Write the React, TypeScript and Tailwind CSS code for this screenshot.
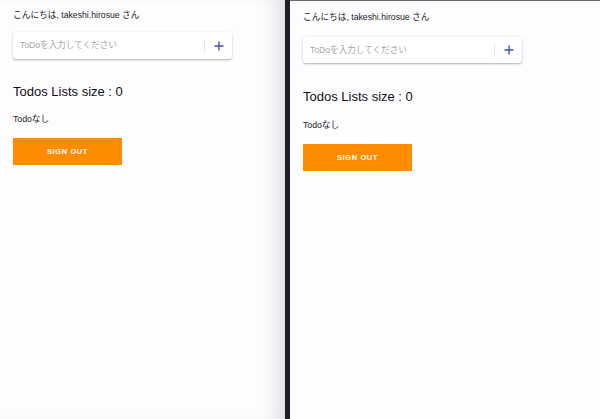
import React from 'react';

interface ScreenProps {
    gaps: {
        top: string;
        card: string;
        cardHeight: string;
        heading: string;
        empty: string;
        button: string;
    };
}

const font = { fontFamily: '"Liberation Sans", "Noto Sans CJK JP", sans-serif' };

const PlusIcon: React.FC = () => (
    <svg width="10" height="10" viewBox="0 0 10 10" fill="none">
        <path d="M5 0.5v9M0.5 5h9" stroke="#3f51b5" strokeWidth="1.4" />
    </svg>
);

const TodoScreen: React.FC<ScreenProps> = ({ gaps }) => {
    return (
        <div className={`flex flex-col items-start px-[13px] ${gaps.top}`}>
            <p className="text-[8.7px] leading-[14px] text-[#222]">こんにちは, takeshi.hirosue さん</p>
            <div
                className={`${gaps.card} ${gaps.cardHeight} flex w-[219px] items-center rounded-[3px] bg-white shadow-[0_1px_3px_rgba(0,0,0,0.2),0_1px_1px_rgba(0,0,0,0.12)]`}
            >
                <input
                    className="min-w-0 flex-1 bg-transparent pl-[7px] text-[8.6px] text-[#333] outline-none placeholder:text-[#a6a6a6]"
                    placeholder="ToDoを入力してください"
                    style={font}
                />
                <div className="h-[13px] w-px bg-[#e4e4e4]" />
                <button className="flex h-full w-[27px] items-center justify-center">
                    <PlusIcon />
                </button>
            </div>
            <h2 className={`${gaps.heading} text-[13px] leading-[18px] text-[#111]`}>Todos Lists size : 0</h2>
            <p className={`${gaps.empty} text-[8.7px] leading-[14px] text-[#222]`}>Todoなし</p>
            <button
                className={`${gaps.button} h-[27px] w-[109px] bg-[#ff8c00] text-[7.5px] font-bold tracking-[0.08em] text-white`}
                style={font}
            >
                SIGN OUT
            </button>
        </div>
    );
};

const App: React.FC = () => {
    return (
        <div className="flex h-[419px] w-[600px] overflow-hidden bg-[#1b2027]" style={font}>
            <div className="w-[285px] shrink-0 bg-[#fdfcff] shadow-[inset_-18px_0_18px_-10px_rgba(0,0,0,0.12)]">
                <TodoScreen
                    gaps={{
                        top: 'pt-[8px]',
                        card: 'mt-[10px]',
                        cardHeight: 'h-[27px]',
                        heading: 'mt-[24px]',
                        empty: 'mt-[11px]',
                        button: 'mt-[12px]',
                    }}
                />
            </div>
            <div className="ml-[5px] flex-1 border-t border-[#6a6a6a] bg-[#fdfcff]">
                <TodoScreen
                    gaps={{
                        top: 'pt-[9px]',
                        card: 'mt-[13px]',
                        cardHeight: 'h-[26px]',
                        heading: 'mt-[25px]',
                        empty: 'mt-[12px]',
                        button: 'mt-[12px]',
                    }}
                />
            </div>
        </div>
    );
};

export default App;
